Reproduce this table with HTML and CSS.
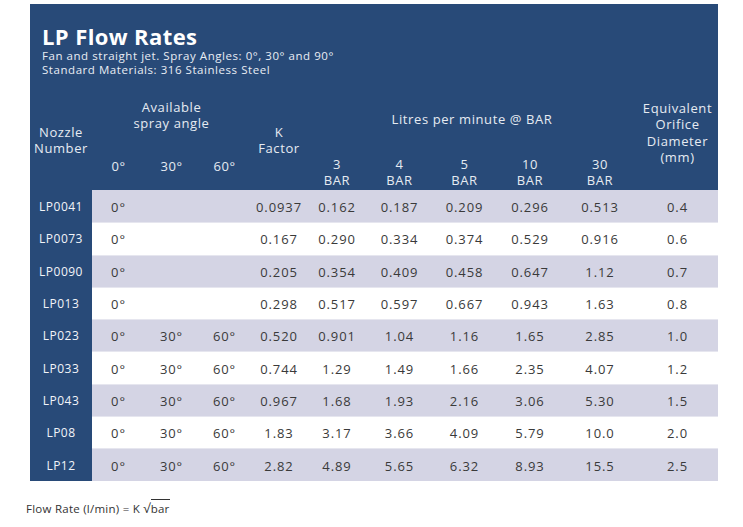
FILE: index.html
```html
<!DOCTYPE html>
<html>
<head>
<meta charset="utf-8">
<link rel="stylesheet" href="styles.css">
</head>
<body>
<div class="panel">
  <div class="intro">
    <h1 class="title">LP Flow Rates</h1>
    <p class="sub">Fan and straight jet. Spray Angles: 0°, 30° and 90°<br>Standard Materials: 316 Stainless Steel</p>
  </div>
  <div class="head">
    <div class="h-nozzle">Nozzle<br>Number</div>
    <div class="h-avail">Available<br>spray angle</div>
    <div class="h-k">K<br>Factor</div>
    <div class="h-litres">Litres per minute @ BAR</div>
    <div class="h-equiv">Equivalent<br>Orifice<br>Diameter<br>(mm)</div>
    <div class="h-ang c2">0°</div>
    <div class="h-ang c3">30°</div>
    <div class="h-ang c4">60°</div>
    <div class="h-bar c6">3<br>BAR</div>
    <div class="h-bar c7">4<br>BAR</div>
    <div class="h-bar c8">5<br>BAR</div>
    <div class="h-bar c9">10<br>BAR</div>
    <div class="h-bar c10">30<br>BAR</div>
  </div>
  <div class="row shade"><div class="nz">LP0041</div><div class="ang">0°</div><div></div><div></div><div>0.0937</div><div>0.162</div><div>0.187</div><div>0.209</div><div>0.296</div><div>0.513</div><div>0.4</div></div>
  <div class="row"><div class="nz">LP0073</div><div class="ang">0°</div><div></div><div></div><div>0.167</div><div>0.290</div><div>0.334</div><div>0.374</div><div>0.529</div><div>0.916</div><div>0.6</div></div>
  <div class="row shade"><div class="nz">LP0090</div><div class="ang">0°</div><div></div><div></div><div>0.205</div><div>0.354</div><div>0.409</div><div>0.458</div><div>0.647</div><div>1.12</div><div>0.7</div></div>
  <div class="row"><div class="nz">LP013</div><div class="ang">0°</div><div></div><div></div><div>0.298</div><div>0.517</div><div>0.597</div><div>0.667</div><div>0.943</div><div>1.63</div><div>0.8</div></div>
  <div class="row shade"><div class="nz">LP023</div><div class="ang">0°</div><div>30°</div><div>60°</div><div>0.520</div><div>0.901</div><div>1.04</div><div>1.16</div><div>1.65</div><div>2.85</div><div>1.0</div></div>
  <div class="row"><div class="nz">LP033</div><div class="ang">0°</div><div>30°</div><div>60°</div><div>0.744</div><div>1.29</div><div>1.49</div><div>1.66</div><div>2.35</div><div>4.07</div><div>1.2</div></div>
  <div class="row shade"><div class="nz">LP043</div><div class="ang">0°</div><div>30°</div><div>60°</div><div>0.967</div><div>1.68</div><div>1.93</div><div>2.16</div><div>3.06</div><div>5.30</div><div>1.5</div></div>
  <div class="row"><div class="nz">LP08</div><div class="ang">0°</div><div>30°</div><div>60°</div><div>1.83</div><div>3.17</div><div>3.66</div><div>4.09</div><div>5.79</div><div>10.0</div><div>2.0</div></div>
  <div class="row shade"><div class="nz">LP12</div><div class="ang">0°</div><div>30°</div><div>60°</div><div>2.82</div><div>4.89</div><div>5.65</div><div>6.32</div><div>8.93</div><div>15.5</div><div>2.5</div></div>
</div>
<p class="formula">Flow Rate (l/min) = K <span class="root">√</span><span class="rad">bar</span></p>
</body>
</html>
```

FILE: styles.css
```css
* { box-sizing: border-box; }
body {
  margin: 0;
  background: #fff;
  font-family: "Open Sans", "Noto Sans", sans-serif;
}
.panel {
  margin: 4px 0 0 30px;
  width: 688px;
  background: #284a78;
}
.intro {
  height: 86px;
  padding: 21px 0 0 12px;
  color: #fff;
}
.title {
  margin: 0;
  font-size: 22px;
  line-height: 23px;
  font-weight: 700;
  letter-spacing: 0.4px;
}
.sub {
  margin: 1px 0 0;
  font-size: 11.5px;
  line-height: 14px;
  letter-spacing: 0.55px;
  color: #e8edf4;
}
.head, .row {
  display: grid;
  grid-template-columns: 62px 53px 53px 53px 56px 60px 65px 65px 66px 74px 81px;
}
.head {
  height: 100px;
  grid-template-rows: 65px 35px;
  color: #e6ebf2;
  font-size: 13px;
  line-height: 16.4px;
  letter-spacing: 0.6px;
  text-align: center;
}
.h-nozzle { grid-column: 1; grid-row: 1 / 3; align-self: center; }
.h-avail { grid-column: 2 / 5; grid-row: 1; padding-top: 9px; }
.h-k { grid-column: 5; grid-row: 1 / 3; align-self: center; }
.h-litres { grid-column: 6 / 11; grid-row: 1; padding-top: 21px; }
.h-equiv { grid-column: 11; grid-row: 1 / 3; padding-top: 10px; }
.h-ang { grid-row: 2; padding-top: 3px; }
.h-bar { grid-row: 2; padding-top: 1px; }
.c2 { grid-column: 2; }
.c3 { grid-column: 3; }
.c4 { grid-column: 4; }
.c6 { grid-column: 6; }
.c7 { grid-column: 7; }
.c8 { grid-column: 8; }
.c9 { grid-column: 9; }
.c10 { grid-column: 10; }
.row {
  height: 32.3px;
  background: #fff;
  color: #3a3a3a;
  font-size: 13px;
  letter-spacing: 0.9px;
  text-align: center;
}
.row > div {
  height: 100%;
  display: flex;
  align-items: center;
  justify-content: center;
  padding-top: 1px;
}
.row + .row > div:not(.nz) { border-top: 1px solid #e6e6ef; }
.row.shade { background: #d4d4e4; }
.row .nz {
  background: #284a78;
  color: #f2f4f8;
  font-size: 12px;
  letter-spacing: 0.5px;
}
.formula {
  margin: 18px 0 0 26px;
  font-size: 11.5px;
  letter-spacing: 0.25px;
  color: #333;
}
.root { font-size: 13px; }
.rad { border-top: 1px solid #333; padding-top: 1px; }
```
